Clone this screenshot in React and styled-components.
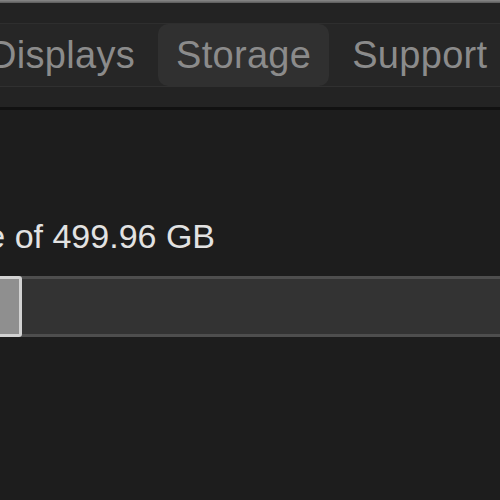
import React from 'react';
import styled, { createGlobalStyle } from 'styled-components'

const GlobalStyle = createGlobalStyle`
  html, body {
    margin: 0;
    padding: 0;
    background: #1d1d1d;
  }
  body {
    font-family: "Liberation Sans", Arial, sans-serif;
  }
`

const Window = styled.div`
  width: 500px;
  height: 500px;
  overflow: hidden;
  background: #1d1d1d;
  display: flex;
  flex-direction: column;
`

const TopEdge = styled.div`
  height: 3px;
  background: linear-gradient(#8a8a8a, #5a5a5a);
  flex-shrink: 0;
`

const Toolbar = styled.div`
  height: 107px;
  background: #232323;
  border-bottom: 3px solid #111111;
  padding-top: 20px;
  box-sizing: border-box;
  flex-shrink: 0;
`

const TabStrip = styled.div`
  height: 62px;
  background: #262626;
  border-top: 1px solid #2e2e2e;
  border-bottom: 1px solid #303030;
  display: flex;
  align-items: stretch;
  gap: 5px;
  margin-left: -29px;
  width: 600px;
`

const Tab = styled.div`
  display: flex;
  align-items: center;
  padding: 0 18px;
  border-radius: 10px;
  font-size: 38px;
  letter-spacing: 0.3px;
  color: #8b8b8b;
  background: ${p => (p.$active ? '#303030' : 'transparent')};
  white-space: nowrap;
`

const Content = styled.div`
  padding-top: 106px;
`

const Caption = styled.div`
  font-size: 34px;
  line-height: 40px;
  color: #e2e2e2;
  white-space: nowrap;
  margin-left: -129px;
`

const Bar = styled.div`
  margin-top: 20px;
  margin-left: -40px;
  width: 600px;
  height: 61px;
  box-sizing: border-box;
  background: #333333;
  border-top: 3px solid #4e4e4e;
  border-bottom: 3px solid #4e4e4e;
  display: flex;
`

const Used = styled.div`
  width: ${p => p.$width}px;
  margin: -3px 0;
  box-sizing: border-box;
  background: #8f8f8f;
  border: 3px solid #d2d2d2;
  border-radius: 3px;
`

const tabs = ['Displays', 'Storage', 'Support']

const App = () => (
  <Window>
    <GlobalStyle />
    <TopEdge />
    <Toolbar>
      <TabStrip>
        {tabs.map(t => (
          <Tab key={t} $active={t === 'Storage'}>{t}</Tab>
        ))}
      </TabStrip>
    </Toolbar>
    <Content>
      <Caption>available of 499.96 GB</Caption>
      <Bar>
        <Used $width={62} />
      </Bar>
    </Content>
  </Window>
)

export default App;
